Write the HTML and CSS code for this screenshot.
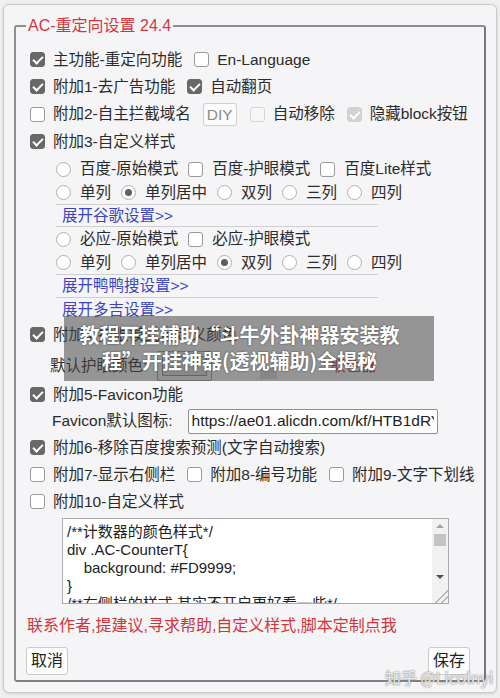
FILE: index.html
```html
<!DOCTYPE html>
<html lang="zh-CN">
<head>
<meta charset="utf-8">
<title>AC-重定向设置</title>
<link rel="stylesheet" href="styles.css">
</head>
<body>
<div class="dialog">
  <fieldset class="panel">
    <legend class="title">AC-重定向设置 24.4</legend>

    <div class="row">
      <label class="opt"><span class="cb on"></span>主功能-重定向功能</label>
      <label class="opt"><span class="cb"></span>En-Language</label>
    </div>
    <div class="row">
      <label class="opt"><span class="cb on"></span>附加1-去广告功能</label>
      <label class="opt"><span class="cb on"></span>自动翻页</label>
    </div>
    <div class="row row-tall">
      <label class="opt"><span class="cb"></span>附加2-自主拦截域名</label>
      <button class="btn-diy">DIY</button>
      <label class="opt"><span class="cb dis"></span>自动移除</label>
      <label class="opt"><span class="cb dis on"></span>隐藏block按钮</label>
    </div>
    <div class="row">
      <label class="opt"><span class="cb on"></span>附加3-自定义样式</label>
    </div>

    <div class="sub">
      <div class="srow">
        <label class="sopt"><span class="rd"></span>百度-原始模式</label>
        <label class="sopt"><span class="cb"></span>百度-护眼模式</label>
        <label class="sopt"><span class="cb"></span>百度Lite样式</label>
      </div>
      <div class="srow sep">
        <label class="sopt"><span class="rd"></span>单列</label>
        <label class="sopt"><span class="rd on"></span>单列居中</label>
        <label class="sopt"><span class="rd"></span>双列</label>
        <label class="sopt"><span class="rd"></span>三列</label>
        <label class="sopt"><span class="rd"></span>四列</label>
      </div>
      <div class="lrow sep"><a class="link">展开谷歌设置&gt;&gt;</a></div>
      <div class="srow">
        <label class="sopt"><span class="rd"></span>必应-原始模式</label>
        <label class="sopt"><span class="cb"></span>必应-护眼模式</label>
      </div>
      <div class="srow sep">
        <label class="sopt"><span class="rd"></span>单列</label>
        <label class="sopt"><span class="rd"></span>单列居中</label>
        <label class="sopt"><span class="rd on"></span>双列</label>
        <label class="sopt"><span class="rd"></span>三列</label>
        <label class="sopt"><span class="rd"></span>四列</label>
      </div>
      <div class="lrow lrow-b sep"><a class="link">展开鸭鸭搜设置&gt;&gt;</a></div>
      <div class="lrow lrow-b"><a class="link">展开多吉设置&gt;&gt;</a></div>
    </div>

    <div class="row">
      <label class="opt"><span class="cb on"></span>附加4-护眼模式自定义颜色</label>
    </div>
    <div class="color-row">
      <span class="field-label">默认护眼颜色:</span>
      <span class="color-box"><span class="swatch"></span></span>
      <span class="small-box"></span>
      <a class="red-link">取色器</a>
    </div>
    <div class="row">
      <label class="opt"><span class="cb on"></span>附加5-Favicon功能</label>
    </div>
    <div class="fav-row">
      <span class="field-label">Favicon默认图标:</span>
      <input class="url" type="text" value="https://ae01.alicdn.com/kf/HTB1dRYq">
    </div>
    <div class="row">
      <label class="opt"><span class="cb on"></span>附加6-移除百度搜索预测(文字自动搜索)</label>
    </div>
    <div class="row">
      <label class="opt"><span class="cb"></span>附加7-显示右侧栏</label>
      <label class="opt"><span class="cb"></span>附加8-编号功能</label>
      <label class="opt"><span class="cb"></span>附加9-文字下划线</label>
    </div>
    <div class="row">
      <label class="opt"><span class="cb"></span>附加10-自定义样式</label>
    </div>

    <div class="ta">
      <div class="ta-text">/**计数器的颜色样式*/
div .AC-CounterT{
    background: #FD9999;
}
/**右侧栏的样式,其实不开启更好看一些*/</div>
      <div class="ta-bar">
        <span class="arr arr-up"></span>
        <span class="thumb"></span>
        <span class="bar-fill"></span>
        <span class="arr arr-down"></span>
        <span class="grip"></span>
      </div>
    </div>

    <div class="contact">联系作者,提建议,寻求帮助,自定义样式,脚本定制点我</div>

    <div class="btn-row">
      <button class="btn">取消</button>
      <button class="btn btn-save">保存</button>
    </div>
  </fieldset>

  <div class="overlay">教程开挂辅助“斗牛外卦神器安装教<br>程”开挂神器(透视辅助)全揭秘</div>
  <div class="watermark">知乎 @Licolnyi</div>
</div>
</body>
</html>
```

FILE: styles.css
```css
* { box-sizing: border-box; }

html, body {
  margin: 0;
  padding: 0;
}

body {
  background: #efeff0;
  font-family: "Liberation Sans", "Noto Sans CJK SC", sans-serif;
  font-size: 15.5px;
  line-height: 20px;
  color: #2b2b2b;
  width: 500px;
  height: 698px;
  overflow: hidden;
}

.dialog {
  position: relative;
  margin: 4px 3px 0 3px;
  width: 494px;
  background: #f5f5f7;
  border: 1px solid #c9c9cc;
  border-radius: 6px;
  padding: 12px 10px 10px 10px;
  box-shadow: 0 1px 3px rgba(0,0,0,0.12);
}

.panel {
  margin: 0;
  border: 2px solid #8e8e8e;
  border-right-color: #777;
  border-bottom-color: #808080;
  border-radius: 3px;
  padding: 11px 12px 5px 12px;
  min-width: 0;
}

.title {
  margin-left: -2px;
  padding: 0 2px;
  font-size: 16px;
  line-height: 18px;
  color: #d6363b;
}

.row {
  display: flex;
  align-items: center;
  height: 27px;
  white-space: nowrap;
}
.row-tall { height: 28px; }

.opt {
  display: inline-flex;
  align-items: center;
  margin-right: 10px;
}

.cb {
  display: inline-block;
  position: relative;
  flex: none;
  width: 15px;
  height: 15px;
  margin-left: 2px;
  margin-right: 8px;
  border: 1px solid #9a9a9a;
  border-radius: 3px;
  background: #fff;
}
.cb.on {
  background: #686868;
  border-color: #686868;
}
.cb.on::after {
  content: "";
  position: absolute;
  left: 4px;
  top: 1px;
  width: 4px;
  height: 8px;
  border-right: 2px solid #fff;
  border-bottom: 2px solid #fff;
  transform: rotate(45deg);
}
.cb.dis {
  border-color: #d6d6d6;
  background: #f7f7f7;
}
.cb.dis.on {
  background: #d2d2d2;
  border-color: #d2d2d2;
}

.btn-diy {
  height: 23px;
  margin: 0 11px 0 2px;
  padding: 0 3px;
  font: inherit;
  line-height: 21px;
  color: #8a8a8a;
  background: #fbfbfb;
  border: 1px solid #cfcfcf;
  border-radius: 3px;
}

.sub {
  margin: 2px 0 0 28px;
  width: 322px;
}

.srow {
  display: flex;
  align-items: center;
  height: 24px;
  white-space: nowrap;
}
.sopt {
  display: inline-flex;
  align-items: center;
  margin-right: 10px;
}
.sopt .cb { margin-left: 0; margin-right: 9px; }

.rd {
  display: inline-block;
  position: relative;
  flex: none;
  width: 15px;
  height: 15px;
  margin-right: 9px;
  border: 1px solid #b0b0b0;
  border-radius: 50%;
  background: #fff;
}
.rd.on::after {
  content: "";
  position: absolute;
  left: 3px;
  top: 3px;
  width: 7px;
  height: 7px;
  border-radius: 50%;
  background: #5f5f5f;
}

.sep { border-bottom: 1px solid #cfcfd2; }

.lrow {
  display: flex;
  align-items: center;
  height: 22px;
  padding-left: 6px;
}
.lrow-b { height: 23px; }

.link {
  color: #3a45c6;
  text-decoration: none;
}

.color-row {
  display: flex;
  align-items: center;
  height: 33px;
  padding-top: 3px;
  padding-left: 22px;
  white-space: nowrap;
}
.field-label { margin-right: 10px; }
.color-box {
  display: inline-flex;
  width: 55px;
  height: 30px;
  padding: 4px;
  border: 1px solid #9a9a9a;
  border-radius: 2px;
  background: #efefef;
}
.swatch {
  flex: 1;
  background: #dcdcdc;
  border: 1px solid #8a8a8a;
}
.small-box {
  display: inline-block;
  width: 17px;
  height: 11px;
  margin: 14px 0 0 48px;
  background: #d8d8d8;
}
.red-link {
  margin-left: 53px;
  color: #c2343a;
}

.fav-row {
  display: flex;
  align-items: center;
  height: 26px;
  padding-left: 24px;
  white-space: nowrap;
}
.fav-row .field-label { margin-right: 15px; }
.url {
  width: 250px;
  height: 25px;
  padding: 0 3px;
  font: inherit;
  color: #222;
  background: #fff;
  border: 1px solid #8f8f8f;
  border-radius: 2px;
  outline: none;
}

.ta {
  display: flex;
  margin: 3px 0 0 34px;
  width: 387px;
  height: 86px;
  background: #fff;
  border: 1px solid #ababab;
}
.ta-text {
  flex: 1;
  padding: 4px 4px 0 4px;
  font-size: 15px;
  line-height: 18px;
  white-space: pre;
  overflow: hidden;
  color: #222;
}
.ta-bar {
  display: flex;
  flex-direction: column;
  align-items: center;
  width: 16px;
  background: #f1f1f1;
}
.arr {
  flex: none;
  width: 0;
  height: 0;
  border-left: 4px solid transparent;
  border-right: 4px solid transparent;
}
.arr-up {
  margin-top: 5px;
  border-bottom: 4px solid #a3a3a3;
}
.thumb {
  flex: none;
  width: 12px;
  height: 12px;
  margin-top: 6px;
  background: #c4c4c4;
}
.bar-fill { flex: 1; }
.arr-down {
  margin-bottom: 10px;
  border-top: 4px solid #505050;
}
.grip {
  flex: none;
  align-self: stretch;
  height: 14px;
  background:
    linear-gradient(135deg, transparent 55%, #b5b5b5 55%, #b5b5b5 62%, transparent 62%, transparent 75%, #b5b5b5 75%, #b5b5b5 82%, transparent 82%);
}

.contact {
  margin-top: 9px;
  height: 26px;
  line-height: 26px;
  font-size: 16px;
  color: #d3343a;
  white-space: nowrap;
  margin-left: -1px;
}

.btn-row {
  display: flex;
  justify-content: space-between;
  align-items: flex-start;
  margin-top: 8px;
  height: 28px;
}
.btn {
  height: 28px;
  margin-left: -2px;
  padding: 0 4px;
  font: inherit;
  font-size: 16px;
  line-height: 26px;
  color: #222;
  background: #fdfdfd;
  border: 1px solid #cbcbcb;
  border-radius: 3px;
}
.btn-save {
  margin-left: 0;
  margin-right: 2px;
}

.overlay {
  position: absolute;
  left: 60px;
  top: 311px;
  width: 370px;
  height: 65px;
  padding: 6px 30px 0 11px;
  background: rgba(70, 70, 70, 0.55);
  color: #fff;
  font-family: "Noto Sans CJK SC", sans-serif;
  font-weight: 700;
  font-size: 20px;
  line-height: 26px;
  text-align: center;
  white-space: nowrap;
  text-shadow: 0 0 2px rgba(0,0,0,0.6);
}

.watermark {
  position: absolute;
  left: 381px;
  top: 662px;
  font-family: "Noto Sans CJK SC", sans-serif;
  font-size: 16px;
  line-height: 20px;
  color: rgba(255,255,255,0.85);
  text-shadow: 0 0 1px #777, 0 0 2px #999;
  white-space: nowrap;
}
```
